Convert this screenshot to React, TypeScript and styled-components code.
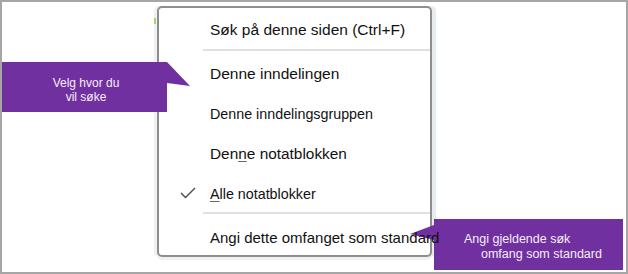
import React from 'react';
import styled, { createGlobalStyle } from 'styled-components';

const GlobalStyle = createGlobalStyle`
  html, body {
    margin: 0;
    padding: 0;
    background: #ffffff;
  }
  body {
    font-family: 'Liberation Sans', Arial, sans-serif;
  }
`;

const Frame = styled.div`
  position: relative;
  width: 628px;
  height: 274px;
  box-sizing: border-box;
  border: 2px solid #a6a6a6;
  background: #ffffff;
  padding: 4px 0 0 155px;
  overflow: hidden;
`;

const Menu = styled.div`
  position: relative;
  width: 275px;
  height: 251px;
  box-sizing: border-box;
  border: 2px solid #8e8e8e;
  border-radius: 5px;
  background: #ffffff;
  box-shadow: -3px 0 0 #eef0f2, 4px 0 0 #e8ebee, 0 3px 0 #f0f1f3;
  display: flex;
  flex-direction: column;

  &::before {
    content: '';
    position: absolute;
    left: -5px;
    top: 10px;
    width: 2px;
    height: 6px;
    background: #a9d474;
  }
`;

const Row = styled.div<{ $h: number; $pad: number }>`
  display: flex;
  align-items: flex-start;
  height: ${({ $h }) => $h}px;
  box-sizing: border-box;
  padding-top: ${({ $pad }) => $pad}px;
  flex-shrink: 0;
`;

const Gutter = styled.div`
  width: 51px;
  flex-shrink: 0;
  display: flex;
  padding-left: 21px;
  box-sizing: border-box;
`;

const Label = styled.span<{ $size: number }>`
  position: relative;
  z-index: 2;
  font-size: ${({ $size }) => $size}px;
  line-height: 1;
  color: #111111;
  white-space: nowrap;
`;

const Key = styled.span`
  text-decoration: underline;
  text-decoration-color: #666666;
  text-underline-offset: 2px;
`;

const Separator = styled.div`
  height: 2px;
  margin-left: 44px;
  background: #e0e0e0;
  flex-shrink: 0;
`;

const Check = styled.svg`
  width: 16px;
  height: 12px;
  fill: none;
  stroke: #4a4a4a;
  stroke-width: 1.4;
`;

const Callout = styled.div`
  position: absolute;
  z-index: 1;
  background: #7030a0;
  color: #f4eef8;
  font-size: 12px;
  box-sizing: border-box;
`;

const LeftCallout = styled(Callout)`
  left: 0;
  top: 60px;
  width: 165px;
  height: 50px;
  padding: 14px 0 0 3px;
  line-height: 14px;
  text-align: center;

  &::after {
    content: '';
    position: absolute;
    left: 100%;
    top: 0;
    width: 23px;
    height: 24px;
    background: #7030a0;
    clip-path: polygon(0 0, 100% 100%, 0 87.5%);
  }
`;

const RightCallout = styled(Callout)`
  left: 432px;
  top: 217px;
  width: 189px;
  height: 51px;
  padding-top: 13px;
  font-size: 12.5px;
  line-height: 15px;

  &::before {
    content: '';
    position: absolute;
    left: -24px;
    top: 6px;
    width: 24px;
    height: 15px;
    background: #7030a0;
    clip-path: polygon(100% 0, 0 60%, 100% 100%);
  }
`;

const CalloutLine = styled.div<{ $indent: number }>`
  padding-left: ${({ $indent }) => $indent}px;
  white-space: nowrap;
`;

export default function App() {
  return (
    <>
      <GlobalStyle />
      <Frame>
        <Menu>
          <Row $h={41} $pad={14}>
            <Gutter />
            <Label $size={15.5}>Søk på denne siden (Ctrl+F)</Label>
          </Row>
          <Separator />
          <Row $h={40} $pad={15}>
            <Gutter />
            <Label $size={15.5}>Denne inndelingen</Label>
          </Row>
          <Row $h={40} $pad={16}>
            <Gutter />
            <Label $size={14.3}>Denne inndelingsgruppen</Label>
          </Row>
          <Row $h={40} $pad={15}>
            <Gutter />
            <Label $size={15.4}>
              Den<Key>n</Key>e notatblokken
            </Label>
          </Row>
          <Row $h={41} $pad={16}>
            <Gutter>
              <Check viewBox="0 0 16 12">
                <polyline points="1,6 5.5,10.5 15,1" />
              </Check>
            </Gutter>
            <Label $size={14.3}>
              <Key>A</Key>lle notatblokker
            </Label>
          </Row>
          <Separator />
          <Row $h={41} $pad={16}>
            <Gutter />
            <Label $size={15}>Angi dette omfanget som standard</Label>
          </Row>
        </Menu>
        <LeftCallout>
          Velg hvor du
          <br />
          vil søke
        </LeftCallout>
        <RightCallout>
          <CalloutLine $indent={30}>Angi gjeldende søk</CalloutLine>
          <CalloutLine $indent={47}>omfang som standard</CalloutLine>
        </RightCallout>
      </Frame>
    </>
  );
}
